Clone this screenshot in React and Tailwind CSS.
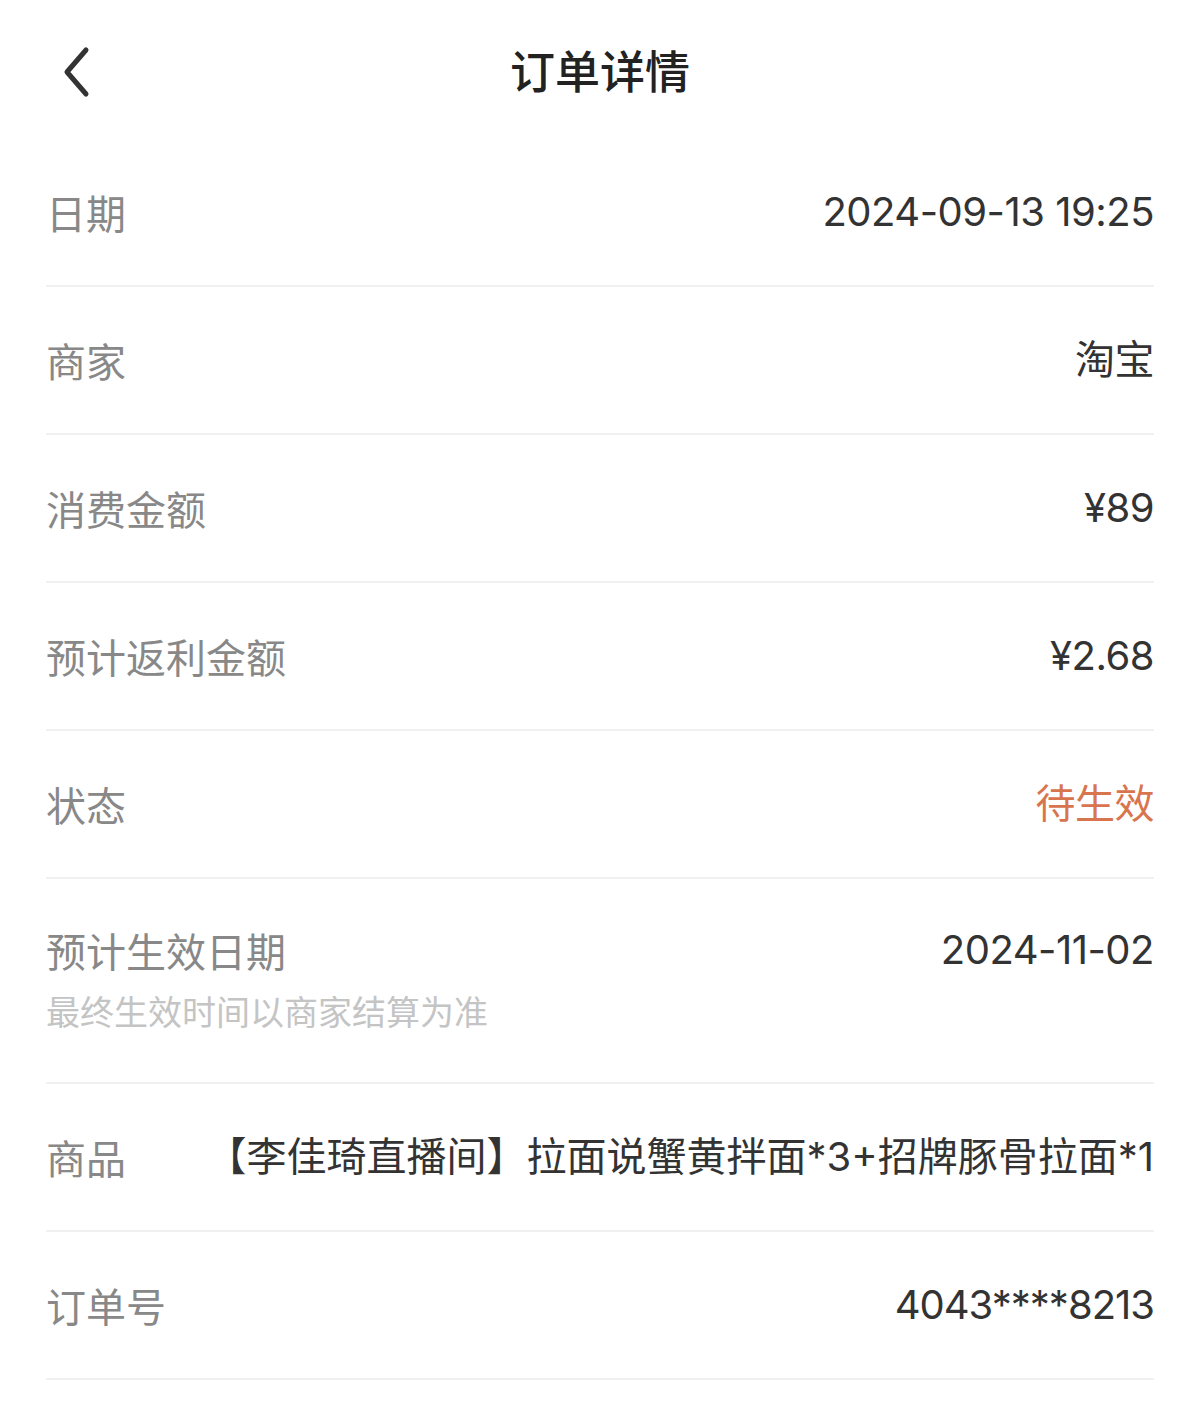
import React from 'react';

const ROWS = [
  { label: '日期', value: '2024-09-13 19:25' },
  { label: '商家', value: '淘宝' },
  { label: '消费金额', value: '¥89' },
  { label: '预计返利金额', value: '¥2.68' },
  { label: '状态', value: '待生效', accent: true },
];

const FONT = { fontFamily: '"Noto Sans CJK SC", "Noto Sans", sans-serif' };
const NUM = { fontFamily: 'Inter, "Noto Sans CJK SC", sans-serif' };

function Row({ label, value, accent }) {
  return (
    <div className="flex h-[148px] items-center justify-between border-b-2 border-[#f0f0f0]">
      <span className="text-[40px] text-[#888888]">{label}</span>
      <span style={NUM} className={`text-[40px] tracking-[-0.5px] ${accent ? 'text-[#d9754e]' : 'text-[#333333]'}`}>{value}</span>
    </div>
  );
}

export default function App() {
  return (
    <div className="min-h-[1425px] w-[1200px] bg-white" style={FONT}>

      {/* Header */}
      <div className="relative flex h-[139px] items-center justify-center">
        <button className="absolute left-[55px] top-[41px] p-1">
          <svg width="34" height="54" viewBox="0 0 34 54" fill="none">
            <path d="M27 5 L8 27 L27 49" stroke="#333" strokeWidth="5" strokeLinecap="round" strokeLinejoin="round" />
          </svg>
        </button>
        <h1 className="text-[45px] font-medium text-[#222222]">订单详情</h1>
      </div>

      <div className="mx-[46px]">
        {ROWS.map((r) => <Row key={r.label} {...r} />)}

        {/* Expected effective date */}
        <div className="flex h-[205px] items-start justify-between border-b-2 border-[#f0f0f0] pt-[46px]">
          <div className="flex flex-col">
            <span className="text-[40px] leading-[50px] text-[#888888]">预计生效日期</span>
            <span className="mt-[8px] text-[34px] leading-[56px] text-[#c4c4c4]">最终生效时间以商家结算为准</span>
          </div>
          <span style={NUM} className="text-[40px] leading-[50px] tracking-[-0.5px] text-[#333333]">2024-11-02</span>
        </div>

        {/* Product */}
        <div className="flex h-[148px] items-center justify-between gap-6 border-b-2 border-[#f0f0f0]">
          <span className="shrink-0 text-[40px] text-[#888888]">商品</span>
          <span style={NUM} className="whitespace-nowrap text-right text-[40px] text-[#333333]">【李佳琦直播间】拉面说蟹黄拌面*3+招牌豚骨拉面*1</span>
        </div>

        <div className="flex h-[148px] items-center justify-between border-b-2 border-[#f0f0f0]">
          <span className="text-[40px] text-[#888888]">订单号</span>
          <span style={NUM} className="text-[40px] tracking-[-1px] text-[#333333]">4043****8213</span>
        </div>
      </div>

    </div>
  );
}
